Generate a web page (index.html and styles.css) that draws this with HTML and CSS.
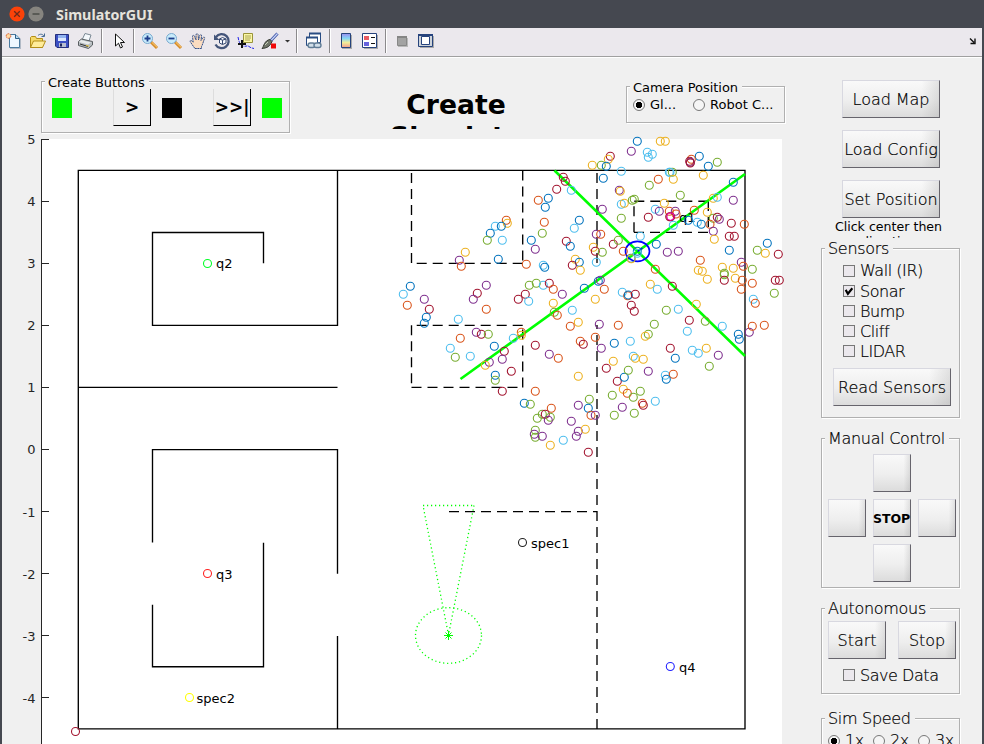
FILE: index.html
```html
<!DOCTYPE html>
<html lang="en">
<head>
<meta charset="utf-8">
<title>SimulatorGUI</title>
<link rel="stylesheet" href="styles.css">
</head>
<body>
<div class="window">
  <header class="titlebar">
    <svg class="winbtn" viewBox="0 0 16 16"><circle cx="8" cy="8" r="7.6" fill="#fb4209"/><path d="M5.2 5.2l5.6 5.6M10.8 5.2l-5.6 5.6" stroke="#6b2a1a" stroke-width="1.3"/></svg>
    <svg class="winbtn" viewBox="0 0 16 16"><circle cx="8" cy="8" r="7.6" fill="#86847f"/><path d="M4.5 8h7" stroke="#42443f" stroke-width="1.3"/></svg>
    <h1>SimulatorGUI</h1>
  </header>

  <nav class="toolbar">
    <svg class="icon" viewBox="0 0 18 18"><path d="M5 3h7l4 4v10H5z" fill="#9aa7b5" opacity=".7"/><path d="M4.500 2.500h6l4 4v9h-10z" fill="#eef7ff" stroke="#4a7a9f"/><path d="M10.500 2.500v4h4" fill="#b8dcf2" stroke="#2d5f88"/><circle cx="3.500" cy="4" r="2.300" fill="#ffd9a0" stroke="#db5b28" stroke-dasharray="1.500 .7"/></svg>
    <svg class="icon" viewBox="0 0 18 18"><path d="M1.500 15.500v-10l1-1h4l1 2h6v9z" fill="#f5d968" stroke="#b38d18"/><path d="M1.500 15.500l3-6.500h12l-3 6.500z" fill="#ffec9a" stroke="#b38d18"/><path d="M9 3.500c2-2 4.500-1.500 6 .5M15.500 1.500v3h-3" fill="none" stroke="#476b93"/></svg>
    <svg class="icon" viewBox="0 0 18 18"><path d="M2.500 2.500h13v13H4l-1.500-1.500z" fill="#3c50c4" stroke="#25307d"/><path d="M5 3h8v6H5z" fill="#dbe8ff"/><path d="M5 3h8v3H5z" fill="#92b4f0"/><path d="M6 11h7v4H6z" fill="#b9bfd0"/><path d="M7 11.500h2v3H7z" fill="#1d2660"/></svg>
    <svg class="icon" viewBox="0 0 18 18"><path d="M5 8l3-6.500 6 1.500-2 6z" fill="#f4f8fc" stroke="#7b8995"/><path d="M1.500 9.500l3-2.500 11 2.500v3.500l-4 3.500-10-3z" fill="#b8bec2" stroke="#585d60"/><path d="M4 8l10 2.500-3 2-9-2.500z" fill="#e9ecec"/><path d="M3 12l8 2.500" stroke="#333"/><path d="M9 13.500l3 .7" stroke="#e8c130"/></svg>
    <i class="sep"></i>
    <svg class="icon" viewBox="0 0 18 18"><path d="M5.500 2v12l3-2.800 2 4.800 2-1-2-4.500h4z" fill="#fff" stroke="#111"/></svg>
    <i class="sep narrow"></i>
    <svg class="icon" viewBox="0 0 18 18"><path d="M10 10l6 6" stroke="#d58b28" stroke-width="3"/><path d="M10.500 10l5.500 5.300" stroke="#ffd27c"/><circle cx="6.500" cy="6.500" r="5" fill="#c8ebfb" stroke="#79a9cf"/><path d="M3.500 6.500h6M6.500 3.500v6" stroke="#1d3d8c" stroke-width="1.800"/></svg>
    <svg class="icon" viewBox="0 0 18 18"><path d="M10 10l6 6" stroke="#d58b28" stroke-width="3"/><path d="M10.500 10l5.500 5.300" stroke="#ffd27c"/><circle cx="6.500" cy="6.500" r="5" fill="#c8ebfb" stroke="#79a9cf"/><path d="M3.500 6.500h6" stroke="#1d3d8c" stroke-width="1.800"/></svg>
    <svg class="icon" viewBox="0 0 18 18"><path d="M6 16.500C4 14 2 11 1.200 9.500c-.4-1.500 1.300-1.500 3 .7L3.500 4.500c0-1.700 1.700-1.500 2 0L7 8V2.800c.2-1.500 2-1.400 2.200 0L9.500 8l1.200-4.500c.5-1.400 2.100-1 1.900.4L12 8.500l1.900-2.800c.9-1.200 2.200-.4 1.700.8-1.400 3-1.600 5.500-3.100 8v2z" fill="#fbdcc0" stroke="#35538b" stroke-dasharray="2 .5"/></svg>
    <svg class="icon" viewBox="0 0 18 18"><path d="M3 5a7 7 0 1 1-.5 7.500" fill="none" stroke="#44557a" stroke-width="2.300"/><path d="M1 2.500v5.500h5.500z" fill="#44557a"/><path d="M9.500 5.500l3.500 1.500v4l-3.500 1.500-3-1.500v-4zM6.500 7l3 1.200 3.500-1.200M9.500 8.200v4" fill="#f7f9ff" stroke="#33466e"/></svg>
    <svg class="icon" viewBox="0 0 18 18"><path d="M1 5c1 5 2 8 5 9s4-1 6 .5 3 1.500 5 2" fill="none" stroke="#2021e8" stroke-dasharray="3 1"/><path d="M6.500 1.500h9v9h-9z" fill="#fbf7a5" stroke="#99933a"/><path d="M8 4h6M8 6h6M8 8h5" stroke="#a9a458"/><path d="M1 12h8M5 8v8" stroke="#111" stroke-width="2"/></svg>
    <svg class="icon" viewBox="0 0 18 18"><path d="M16.500 1.500L9 9.500" stroke="#3c51a5" stroke-width="3"/><path d="M16.500 1.500L9 9.500" stroke="#c8d6f7" stroke-width="1.200"/><path d="M9 7.500l2 2c-2 5-5 6.500-10 7 2-2 2-8 8-9z" fill="#707568" stroke="#34372f"/><path d="M4 13l3-3" stroke="#c8cfb8"/><path d="M10 11.500h5v5h-5z" fill="#f00808"/></svg>
    <svg class="caret" viewBox="0 0 11 18"><path d="M3 8h5L5.500 10.500z" fill="#333"/></svg>
    <i class="sep"></i>
    <svg class="icon" viewBox="0 0 18 18"><path d="M4.500 1.500h11v9h-11z" fill="#fff" stroke="#294c83"/><path d="M4 1.500h12" stroke="#294c83" stroke-width="2"/><path d="M1.500 5.500h11v8h-11z" fill="#fff" stroke="#294c83"/><path d="M1 5.500h12" stroke="#294c83" stroke-width="2"/><rect x="3" y="11" width="7" height="4.500" rx="2.200" fill="#d2dfe9" stroke="#607c96" stroke-width="1.400"/><rect x="9" y="11" width="7" height="4.500" rx="2.200" fill="#d2dfe9" stroke="#607c96" stroke-width="1.400"/></svg>
    <i class="sep narrow8"></i>
    <svg class="icon" viewBox="0 0 18 18"><defs><linearGradient id="cb" x2="0" y2="1"><stop stop-color="#9b8cf0"/><stop offset=".35" stop-color="#83d6f5"/><stop offset=".65" stop-color="#f3ee98"/><stop offset="1" stop-color="#f39c8d"/></linearGradient></defs><path d="M5 3h10v14H5z" fill="#aaa"/><path d="M4.500 1.500h9v14h-9z" fill="url(#cb)" stroke="#26437d"/></svg>
    <svg class="icon" viewBox="0 0 18 18"><path d="M3 3h14v14H3z" fill="#aaa"/><path d="M1.500 1.500h14v14h-14z" fill="#fff" stroke="#26437d"/><path d="M3 4h5v4H3z" fill="#e95b62"/><path d="M3 10h5v4H3z" fill="#6763dd"/><path d="M10 5.500h4M10 11.500h4" stroke="#111"/></svg>
    <i class="sep narrow8"></i>
    <svg class="icon" viewBox="0 0 18 18"><path d="M5 6h10v9H5z" fill="#b9b9b9"/><path d="M4.500 4.500h9v9h-9z" fill="#a3a3a3" stroke="#888"/><path d="M4 5h10" stroke="#858585" stroke-width="2"/></svg>
    <svg class="icon" viewBox="0 0 18 18"><path d="M3 4h14v12H3z" fill="#aaa"/><path d="M1.500 2.500h14v12h-14z" fill="#cdd3da" stroke="#26437d"/><path d="M1 3h15" stroke="#26437d" stroke-width="2"/><path d="M4.500 4.500h8v8h-8z" fill="#fff" stroke="#26437d"/></svg>
    <svg class="undock" viewBox="0 0 8 8"><path d="M1 1.500l4 4M6 1.500v5H1.500" fill="none" stroke="#111" stroke-width="1.400"/></svg>
  </nav>

  <div class="content">
    <main>
      <div class="head">
        <section class="group create">
          <h2>Create Buttons</h2>
          <div class="create-row">
            <i class="lamp"></i><button class="flat first">&gt;</button>
            <i class="lamp off"></i><button class="flat second">&gt;&gt;|</button><i class="lamp"></i>
          </div>
        </section>
        <div class="heading">Create Simulator</div>
        <section class="group camera">
          <h2>Camera Position</h2>
          <div class="camera-row">
            <label><i class="radio on"></i>Gl...</label>
            <label><i class="radio"></i>Robot C...</label>
          </div>
        </section>
      </div>
      <svg class="plot" viewBox="2 138 780 606">
        <rect x="42" y="139" width="740" height="605" fill="#fff"/>
        <path class="axis" d="M41.500 744V139.500M41 139.500h8M41 201.500h8M41 263.500h8M41 325.500h8M41 387.500h8M41 449.500h8M41 511.500h8M41 573.500h8M41 635.500h8M41 697.500h8"/>
        <g class="ticks">
          <text x="35.500" y="144">5</text><text x="35.500" y="206">4</text><text x="35.500" y="268">3</text><text x="35.500" y="330">2</text><text x="35.500" y="392">1</text><text x="35.500" y="454">0</text><text x="35.500" y="516.500">-1</text><text x="35.500" y="578.500">-2</text><text x="35.500" y="640.500">-3</text><text x="35.500" y="702.500">-4</text>
        </g>
        <g class="walls">
          <path d="M78.300 170.400H745V728.800H78.300z"/>
          <path d="M337.500 170.500V325.300H152.500V232.500H263.500V263.300M78 387.400H337.500M152.500 542.500V449.600H337.500V573.700M263.500 542.700V666.700H152.500V604.700M337.500 636V729"/>
        </g>
        <g class="walls dashed">
          <path d="M522.700 170.500V263"/><path d="M522.700 263.300H411.500"/><path d="M411.500 263V170.500"/>
          <path d="M522.700 325.300H411.500"/><path d="M411.500 325.300V387.500"/><path d="M411.500 387.400H522.700"/><path d="M522.700 387.400V325.300"/>
          <path d="M597 263V170.500"/><path d="M597 729V325"/><path d="M449 511.600H597"/>
          <path d="M708.300 201.200H634"/><path d="M634 232.300V201"/><path d="M634 232.300H708.300"/><path d="M708.300 201V232.300"/>
        </g>
        <path class="sonar" d="M554.500 170.500L745 356M460.500 379L745 174"/>
        <ellipse class="robot" cx="637.500" cy="251.300" rx="12" ry="10"/>
        <path d="M637.500 251.500l5-3.500" stroke="#00f" stroke-width="1.500"/>
        <g class="ghost">
          <path d="M448.500 635L423 505.500"/><path d="M423 505.500H475"/><path d="M474 505.500L448.500 635"/>
          <ellipse cx="448.500" cy="635.500" rx="33" ry="27.800"/>
        </g>
        <path d="M444 635.500h9M448.500 631v9M445.500 632.500l6 6M451.500 632.500l-6 6" stroke="#0f0"/>
        <g class="labels">
          <text x="216" y="268">q2</text><text x="216" y="579">q3</text><text x="196.500" y="703">spec2</text><text x="531" y="548">spec1</text><text x="679" y="672">q4</text><text x="679" y="222">q1</text>
        </g>
        <g class="marks">
          <circle cx="207.500" cy="263.500" r="4" stroke="#00ff26"/><circle cx="207.500" cy="573.500" r="4" stroke="#f22"/><circle cx="189.500" cy="697.500" r="4" stroke="#ff0"/><circle cx="522.500" cy="542.500" r="4" stroke="#222"/><circle cx="670.300" cy="666.500" r="4" stroke="#22f"/><circle cx="75.500" cy="731.500" r="4" stroke="#a2142f"/>
        </g>
        <g class="marks" id="samples"></g>
        <circle cx="670.500" cy="216.500" r="3.700" fill="none" stroke="#f0c" stroke-width=".8"/>
      </svg>
    </main>

    <aside>
      <button class="btn">Load Map</button>
      <button class="btn">Load Config</button>
      <button class="btn">Set Position</button>
      <p class="hint">Click center then direction</p>
      <section class="group sensors">
        <h2>Sensors</h2>
        <label><i class="check"></i>Wall (IR)</label>
        <label><i class="check"><svg viewBox="0 0 9 9"><path d="M1.500 3.500l2 3.500 4-5" fill="none" stroke="#000" stroke-width="1.900"/></svg></i>Sonar</label>
        <label><i class="check"></i>Bump</label>
        <label><i class="check"></i>Cliff</label>
        <label><i class="check"></i>LIDAR</label>
        <button class="btn">Read Sensors</button>
      </section>
      <section class="group manual">
        <h2>Manual Control</h2>
        <div class="pad">
          <button class="btn up"></button><button class="btn left"></button><button class="btn stop">STOP</button><button class="btn"></button><button class="btn down"></button>
        </div>
      </section>
      <section class="group auto">
        <h2>Autonomous</h2>
        <div class="pair"><button class="btn">Start</button><button class="btn">Stop</button></div>
        <label><i class="check"></i>Save Data</label>
      </section>
      <section class="group speed">
        <h2>Sim Speed</h2>
        <div class="speeds">
          <label><i class="radio on"></i>1x</label><label><i class="radio"></i>2x</label><label><i class="radio"></i>3x</label>
        </div>
      </section>
    </aside>
  </div>
</div>
<script src="samples.js"></script>
</body>
</html>
```
FILE: styles.css
```css
* { box-sizing: border-box; }
body { margin: 0; width: 984px; height: 744px; overflow: hidden; background: #454850; font-family: "DejaVu Sans", sans-serif; color: #000; }
.window { height: 744px; padding: 0 2px; display: flex; flex-direction: column; overflow: hidden; }
.titlebar { height: 28px; flex: none; display: flex; align-items: center; padding-left: 7px; }
.winbtn { width: 16px; height: 16px; margin-right: 3px; }
h1 { margin: 2px 0 0 9px; font: bold 14.300px/28px "Noto Sans", "Open Sans", sans-serif; color: #e6e3dc; }
.toolbar { height: 29px; flex: none; display: flex; align-items: center; background: #ebe8ed; border-bottom: 1px solid #a0a0a0; padding-bottom: 2px; }
.icon { width: 18px; height: 18px; margin: 0 3px; flex: none; }
.caret { width: 11px; height: 18px; flex: none; }
.sep { width: 2px; height: 24px; margin: 0 4px 0 3px; background: #8b898c; border-right: 1px solid #fff; }
.sep.narrow { margin: 0 3px 0 2px; }
.sep.narrow8 { margin: 0 3px; }
.undock { width: 8px; height: 8px; margin: 0 5px 0 auto; }
.content { flex: 1; display: flex; background: #f0f0f0; border-top: 1px solid #fff; min-height: 0; }
main { width: 819px; flex: none; }
.head { height: 80px; display: flex; }
.group { border: 1px solid #b0b0b0; box-shadow: 1px 1px 0 #fff, inset 1px 1px 0 #fff; }
.group h2 { margin: 0 0 0 3px; padding: 0 4px 0 3px; width: fit-content; background: #f0f0f0; font-weight: 400; font-size: 13px; line-height: 16px; white-space: nowrap; }
.group.create { width: 249px; height: 52px; margin: 23px 0 0 39px; }
.group.create h2 { margin-top: -7px; letter-spacing: -.06px; }
.create-row { display: flex; align-items: center; padding-left: 10px; margin-top: -2px; }
.lamp { width: 20px; height: 20px; background: #0f0; }
.lamp.off { background: #000; margin-left: 11px; }
.flat { width: 38px; height: 37px; padding: 0; border: solid; border-width: 0 1px 1px 1px; border-color: #000 #000 #000 #ddd; background: #f0f0f0; font: bold 17px "DejaVu Sans", sans-serif; white-space: nowrap; }
.flat.first { margin-left: 41px; }
.flat.second { margin-left: 31px; margin-right: 11px; }
.heading { width: 132px; height: 40px; margin: 31px 0 0 100px; overflow: hidden; text-align: center; font-size: 26.600px; font-weight: 700; line-height: 32px; }
.group.camera { width: 159px; height: 37px; margin: 28px 0 0 104px; }
.group.camera h2 { margin-top: -7px; letter-spacing: -.05px; }
.camera-row { display: flex; gap: 17px; padding: 1px 0 0 6px; font-size: 13px; line-height: 16px; white-space: nowrap; }
label { display: flex; align-items: center; white-space: nowrap; }
.radio { width: 12px; height: 12px; border: 1px solid #777; border-radius: 50%; background: #f5f5f5; margin-right: 5px; flex: none; }
.radio.on { background: radial-gradient(circle, #000 0 2.900px, #f5f5f5 3.500px); }
.plot { display: block; width: 780px; height: 606px; overflow: visible; }
.axis { fill: none; stroke: #262626; }
.ticks { font-size: 13px; fill: #262626; text-anchor: end; }
.labels { font-size: 13px; }
.walls { fill: none; stroke: #000; stroke-width: 1.350; }
.dashed { stroke-dasharray: 10 6; }
.sonar { stroke: #0f0; stroke-width: 2.600; }
.robot { fill: none; stroke: #00f; stroke-width: 1.700; }
.ghost { fill: none; stroke: #0f0; stroke-width: 1.300; stroke-dasharray: 1.200 2.800; }
.marks { fill: none; stroke-width: 1.080; }
aside { width: 139px; flex: none; padding-top: 22px; font-weight: 200; font-size: 16px; -webkit-text-stroke: .2px #000; }
.btn { display: block; width: 98px; height: 38px; margin: 0; padding: 0; border: 1px solid; border-color: #d8d8e0 #66646c #66646c #d8d8e0; background: linear-gradient(90deg, transparent 82%, rgba(120,120,120,.18)), linear-gradient(#f9f9f9, #eee 55%, #dcdcdc); font: 200 16px "DejaVu Sans", sans-serif; letter-spacing: -.05px; color: #000; white-space: nowrap; -webkit-text-stroke: .2px #000; }
aside > .btn { margin: 0 0 12px 21px; }
aside > .btn:nth-child(3) { margin-bottom: 0; }
.hint { margin: 0 0 10px; padding: 1px 4px 0 0; height: 20px; overflow: hidden; text-align: center; font-size: 12.600px; font-weight: 400; line-height: 15px; -webkit-text-stroke: 0; }
aside .group h2 { margin-top: -10px; margin-bottom: -1px; font-size: 16px; font-weight: 200; line-height: 20px; letter-spacing: -.3px; }
aside label { letter-spacing: -.45px; }
.check { width: 12px; height: 12px; border: 1px solid #777; background: #ebe8ed; margin-right: 5px; display: flex; }
.check svg { width: 10px; height: 10px; }
.sensors { height: 170px; margin-bottom: 20px; }
.sensors label { height: 20px; padding-left: 21px; }
.sensors label:nth-of-type(1) { margin-top: 2px; height: 21px; }
.sensors .btn { width: 118px; margin: 7px 0 0 11px; }
.manual { height: 150px; margin-bottom: 20px; }
.pad { display: grid; grid-template-columns: repeat(3, 38px); gap: 7px; padding: 6px 0 0 6px; }
.pad .btn { width: 38px; }
.pad .up, .pad .down { grid-column: 2; }
.pad .left { grid-column: 1; }
.pad .stop { font-weight: 700; font-size: 12.500px; text-indent: -1px; -webkit-text-stroke: 0; }
.auto { height: 86px; margin-bottom: 24px; }
.pair { display: flex; gap: 12px; padding: 3px 0 0 6px; }
.pair .btn { width: 58px; }
.auto label { height: 32px; padding-left: 21px; }
.speed { height: 60px; }
.speeds { display: grid; grid-template-columns: repeat(3, 45px); padding: 3px 0 0 6px; }
```
FILE: samples.js
```javascript
// Particle samples grouped by map tile; offsets are in thirds of a map pixel.
const colors = { b: "#0072bd", o: "#d95319", y: "#edb120", p: "#7e2f8e", g: "#77ac30", c: "#4dbeee", r: "#a2142f" };
const tiles = [
  [390, 130, "r520,142 r526,154 r500,178 c544,181 b475,205 b466,232 o445,211 o463,277 g457,310 b568,271 c553,295 b424,331 p436,358 r529,334 b541,349 y556,388 b568,397 r547,406 y571,421 o409,403 c460,406 b464,412 o349,271 y352,280 c316,289 b334,289 b301,310 g292,331 c337,331 y226,367 p208,391 o214,409 b325,388 b61,469 c40,493 p103,508 p289,466 r262,490 p250,508 g418,466 g439,460 c460,466 r478,460 o490,478 p517,493 r406,493 r385,508 c416,514 b583,475"],
  [590, 130, "b142,34 y211,34 y226,34 p124,64 r61,79 y55,88 g34,106 b49,109 y7,106 c172,67 c187,73 c175,82 c94,124 b40,145 p88,181 y91,184 c94,223 y103,220 g127,211 g133,208 p37,238 g94,265 p19,313 o32,313 c151,319 r70,343 g85,331 y10,352 r16,364 g37,367 c19,397 b25,454 p31,451 o43,478 y16,508 o100,364 b199,343 p232,367 p265,364 b123,385 y124,386 b142,364 c142,370 o196,418 y181,463 c202,478 r247,469 c97,487 o113,497 b115,495 r136,493"],
  [590, 130, "b328,79 o304,88 r299,94 p301,97 r301,99 b355,109 g382,97 c238,127 g247,127 c240,127 y250,148 o205,148 g178,166 y340,136 b430,157 g271,196 y223,220 y370,205 c382,202 p430,211 c196,238 p208,244 o238,244 p256,244 o258,252 r239,260 r242,260 r175,262 c250,286 b295,271 o313,241 c322,277 b334,283 y352,247 g370,265 r382,262 p388,268 o360,283 p370,304 y373,328 r424,280 o463,283 r418,319 r433,319 b418,361 o331,391 y325,421 y337,424 y352,448 y397,412 g403,430 g403,434 r403,451 y430,415 p454,397 o460,409 g487,418 y436,445 o457,451 o487,460 o454,478 b532,340 g502,361 y526,370 r565,373 r556,451 r568,451 g553,490 c490,508"],
  [390, 290, "o52,46 r118,58 b109,82 b103,100 c205,88 o289,58 y490,40 c547,61 g493,67 o502,76 y565,97 o541,109 o211,145 p259,127 r274,133 g295,133 o394,127 y394,136 c370,145 b313,169 r343,184 c181,175 g196,202 c241,199 p298,217 y286,226 p337,208 r364,244 b316,256 g316,271 r337,304 r436,166 o571,154 r580,163 p478,193 o505,205 y565,259 o436,304 b403,340 g421,343 o484,355 g442,385 g457,373 r466,373 g481,382 p475,391 p565,346 p544,394 g436,421 p433,433 g436,442 p457,439 p565,424 p559,439 y586,418 y481,466 c520,451 r595,487 g598,328 b595,355 o603,376"],
  [590, 290, "p28,103 o16,142 p34,175 o85,106 b73,160 c121,154 r124,46 r133,64 g229,61 c265,58 y319,43 r298,91 g346,94 c397,109 g193,103 g175,133 y166,139 c292,124 r241,175 b256,205 c307,181 c325,190 y349,175 p385,196 g358,229 c130,199 y136,205 y160,208 y70,214 r49,235 r82,274 b103,262 g115,241 p175,244 c226,256 o250,253 b229,268 y100,298 o112,310 g67,316 g151,304 g130,322 o157,340 r160,346 c196,334 p97,352 g73,376 g133,370 p16,376 b445,133 b448,148 p478,127 o487,109 o523,106 o496,40"]
];
const layer = document.getElementById("samples");
for (const [x0, y0, list] of tiles) {
  for (const item of list.split(" ")) {
    const [dx, dy] = item.slice(1).split(",").map(Number);
    const c = document.createElementNS("http://www.w3.org/2000/svg", "circle");
    c.setAttribute("cx", (x0 + dx / 3).toFixed(1));
    c.setAttribute("cy", (y0 + dy / 3).toFixed(1));
    c.setAttribute("r", 4);
    c.setAttribute("stroke", colors[item[0]]);
    layer.appendChild(c);
  }
}
```
